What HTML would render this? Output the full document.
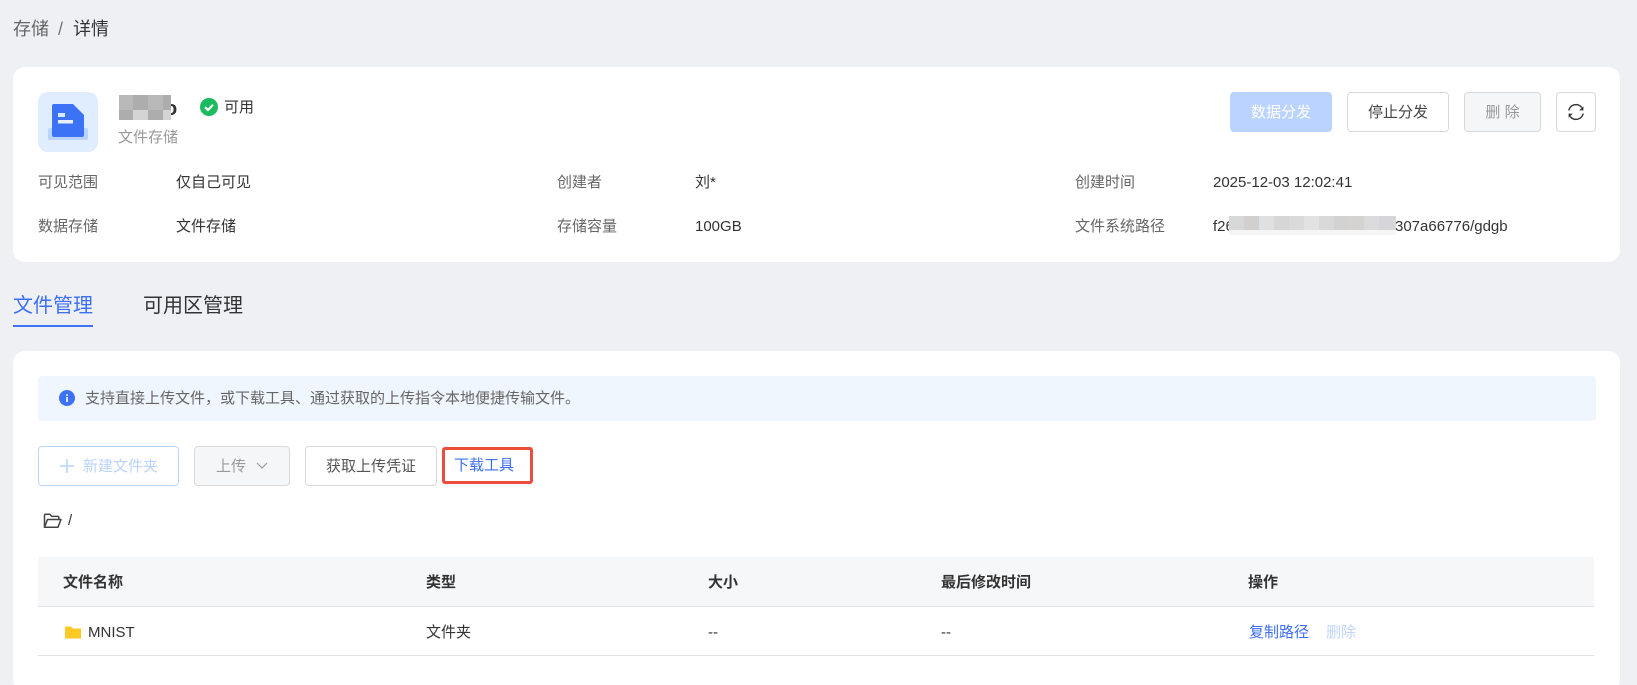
<!DOCTYPE html>
<html lang="zh-CN">
<head>
<meta charset="utf-8">
<title>存储详情</title>
<style>
*{box-sizing:border-box;margin:0;padding:0}
html,body{width:1637px;height:685px;overflow:hidden;background:#eff0f4}
body{position:relative;font-family:"Liberation Sans","Noto Sans CJK SC",sans-serif;font-size:15px;color:#333}
.a{position:absolute;white-space:nowrap}
.t{position:absolute;white-space:nowrap;height:24px;line-height:24px;margin-top:1px}
.card{position:absolute;left:13px;width:1607px;background:#fff}
.l{color:#666}
.btn{position:absolute;height:40px;line-height:40px;text-align:center;border:1px solid #d9d9d9;border-radius:4px;background:#fff;color:#444;white-space:nowrap}
.th{font-weight:700;color:#333}
.m{position:absolute}
</style>
</head>
<body>
<!-- breadcrumb -->
<div class="t" style="left:13px;top:16px;font-size:18px;color:#666">存储</div>
<div class="t" style="left:58px;top:16px;font-size:18px;color:#777">/</div>
<div class="t" style="left:73px;top:16px;font-size:18px;color:#333">详情</div>

<!-- header card -->
<div class="card" style="top:67px;height:195px;border-radius:12px"></div>
<div class="a" style="left:38px;top:92px;width:60px;height:60px;background:#e0ecff;border-radius:10px"></div>
<svg class="a" style="left:38px;top:92px" width="60" height="60" viewBox="0 0 60 60">
  <rect x="10" y="36" width="40" height="12" rx="2" fill="#b9d4ff"/>
  <path d="M16 12h19l11 11v20a2 2 0 0 1-2 2H16a2 2 0 0 1-2-2V14a2 2 0 0 1 2-2z" fill="#3c72f6"/>
  <rect x="20" y="21" width="7" height="4" fill="#dbe6ff"/>
  <rect x="20" y="28" width="15" height="3.5" fill="#e8efff"/>
</svg>

<!-- masked name -->
<div class="a" style="left:165px;top:97px;font-size:20px;line-height:24px;font-weight:700;color:#333">o</div>
<div class="m" style="left:119px;top:95px;width:14px;height:15px;background:#b9b9b9"></div>
<div class="m" style="left:133px;top:95px;width:15px;height:15px;background:#adadad"></div>
<div class="m" style="left:148px;top:95px;width:15px;height:15px;background:#b9b9b9"></div>
<div class="m" style="left:163px;top:95px;width:8px;height:15px;background:#adadad"></div>
<div class="m" style="left:119px;top:110px;width:14px;height:10px;background:#adadad"></div>
<div class="m" style="left:133px;top:110px;width:15px;height:10px;background:#d4d4d4"></div>
<div class="m" style="left:148px;top:110px;width:15px;height:10px;background:#adadad"></div>
<div class="m" style="left:163px;top:110px;width:8px;height:10px;background:#d4d4d4"></div>

<svg class="a" style="left:200px;top:98px" width="18" height="18" viewBox="0 0 18 18">
  <circle cx="9" cy="9" r="9" fill="#1dbb5f"/>
  <path d="M5 9.200l3 2.800 5-5.200" fill="none" stroke="#fff" stroke-width="2.200"/>
</svg>
<div class="t" style="left:224px;top:95px">可用</div>
<div class="t" style="left:118px;top:125px;color:#999">文件存储</div>

<div class="btn" style="left:1230px;top:92px;width:102px;background:#bad4ff;border-color:#bad4ff;color:#fff">数据分发</div>
<div class="btn" style="left:1347px;top:92px;width:102px;">停止分发</div>
<div class="btn" style="left:1464px;top:92px;width:77px;background:#f5f6f8;color:#999">删 除</div>
<div class="btn" style="left:1556px;top:92px;width:40px"></div>
<svg class="a" style="left:1566px;top:102px" width="20" height="20" viewBox="0 0 20 20">
  <path d="M2.800 8.500A7.300 7.300 0 0 1 15.800 5.600" fill="none" stroke="#333" stroke-width="1.400"/>
  <path d="M17.200 11.500A7.300 7.300 0 0 1 4.200 14.400" fill="none" stroke="#333" stroke-width="1.400"/>
  <path d="M17.400 4.200v4.200h-4.200z" fill="#333"/>
  <path d="M2.600 15.800v-4.200h4.200z" fill="#333"/>
</svg>

<!-- info rows -->
<div class="t l" style="left:38px;top:170px">可见范围</div>
<div class="t" style="left:176px;top:170px">仅自己可见</div>
<div class="t l" style="left:557px;top:170px">创建者</div>
<div class="t" style="left:695px;top:170px">刘*</div>
<div class="t l" style="left:1075px;top:170px">创建时间</div>
<div class="t" style="left:1213px;top:170px">2025-12-03 12:02:41</div>

<div class="t l" style="left:38px;top:214px">数据存储</div>
<div class="t" style="left:176px;top:214px">文件存储</div>
<div class="t l" style="left:557px;top:214px">存储容量</div>
<div class="t" style="left:695px;top:214px">100GB</div>
<div class="t l" style="left:1075px;top:214px">文件系统路径</div>
<div class="t" style="left:1213px;top:214px">f26</div>
<div class="t" style="left:1395px;top:214px">307a66776/gdgb</div>
<!-- path mask -->
<div class="m" style="left:1229px;top:230px;width:167px;height:5px;background:#f5f5f5"></div>
<div class="m" style="left:1229px;top:216px;width:15px;height:14px;background:#d8d8d9"></div>
<div class="m" style="left:1244px;top:216px;width:15px;height:14px;background:#d2d0ce"></div>
<div class="m" style="left:1259px;top:216px;width:15px;height:14px;background:#dfe0e1"></div>
<div class="m" style="left:1274px;top:216px;width:15px;height:14px;background:#d6d6d6"></div>
<div class="m" style="left:1289px;top:216px;width:15px;height:14px;background:#dadada"></div>
<div class="m" style="left:1304px;top:216px;width:15px;height:14px;background:#e2e2e3"></div>
<div class="m" style="left:1319px;top:216px;width:15px;height:14px;background:#d9d9da"></div>
<div class="m" style="left:1334px;top:216px;width:15px;height:14px;background:#d3d2d1"></div>
<div class="m" style="left:1349px;top:216px;width:15px;height:14px;background:#d5d3d2"></div>
<div class="m" style="left:1364px;top:216px;width:15px;height:14px;background:#dbdbdb"></div>
<div class="m" style="left:1379px;top:216px;width:17px;height:14px;background:#d5d5da"></div>

<!-- tabs -->
<div class="t" style="left:13px;top:290px;height:30px;line-height:30px;font-size:20px;color:#3d6ff5">文件管理</div>
<div class="m" style="left:13px;top:325px;width:80px;height:2px;background:#3d72f6"></div>
<div class="t" style="left:143px;top:290px;height:30px;line-height:30px;font-size:20px;color:#333">可用区管理</div>

<!-- main card -->
<div class="card" style="top:351px;height:340px;border-radius:12px"></div>
<div class="a" style="left:38px;top:376px;width:1558px;height:45px;background:#f0f6fe;border-radius:4px"></div>
<svg class="a" style="left:59px;top:390px" width="16" height="16" viewBox="0 0 16 16">
  <circle cx="8" cy="8" r="8" fill="#3d72f6"/>
  <rect x="7.200" y="7" width="1.600" height="5" fill="#fff"/>
  <rect x="7.200" y="4.200" width="1.600" height="1.700" fill="#fff"/>
</svg>
<div class="t" style="left:85px;top:386px;color:#666">支持直接上传文件，或下载工具、通过获取的上传指令本地便捷传输文件。</div>

<!-- toolbar -->
<div class="btn" style="left:38px;top:446px;width:141px;border-color:#bad4ff;color:#bad4ff;padding-left:24px">新建文件夹</div>
<svg class="a" style="left:59px;top:458px" width="16" height="16" viewBox="0 0 16 16">
  <path d="M8 1v14M1 8h14" stroke="#bad4ff" stroke-width="1.600" fill="none"/>
</svg>
<div class="btn" style="left:194px;top:446px;width:96px;background:#f5f6f8;color:#999;text-align:left;padding-left:21px">上传</div>
<svg class="a" style="left:255px;top:461px" width="14" height="10" viewBox="0 0 14 10">
  <path d="M2 2l5 5 5-5" fill="none" stroke="#999" stroke-width="1.200"/>
</svg>
<div class="btn" style="left:305px;top:446px;width:132px;color:#555">获取上传凭证</div>
<div class="a" style="left:442px;top:447px;width:91px;height:37px;border:3px solid #ee4c3e;border-radius:3px;background:#fff;color:#3d6ff5;font-size:15px;line-height:31px;padding-left:9px">下载工具</div>

<!-- path -->
<svg class="a" style="left:43px;top:513px" width="20" height="16" viewBox="0 0 20 16">
  <path d="M1.500 14V2.200a1 1 0 0 1 1-1h4.300l2 2.200h6a1 1 0 0 1 1 1V6.500" fill="none" stroke="#444" stroke-width="1.500"/>
  <path d="M1.500 14.200l3-7.700h13.500l-3 7.700z" fill="none" stroke="#444" stroke-width="1.500" stroke-linejoin="round"/>
</svg>
<div class="t" style="left:68px;top:508px;color:#333">/</div>

<!-- table -->
<div class="a" style="left:38px;top:557px;width:1556px;height:50px;background:#f6f7f9;border-bottom:1px solid #e2e3ee"></div>
<div class="t th" style="left:63px;top:570px">文件名称</div>
<div class="t th" style="left:426px;top:570px">类型</div>
<div class="t th" style="left:708px;top:570px">大小</div>
<div class="t th" style="left:941px;top:570px">最后修改时间</div>
<div class="t th" style="left:1248px;top:570px">操作</div>
<svg class="a" style="left:65px;top:625px" width="16" height="14" viewBox="0 0 16 14">
  <path d="M0 1.500h6l2 2h8v10H0z" fill="#ffc926"/>
</svg>
<div class="t" style="left:88px;top:620px">MNIST</div>
<div class="t" style="left:426px;top:620px">文件夹</div>
<div class="t" style="left:708px;top:620px">--</div>
<div class="t" style="left:941px;top:620px">--</div>
<div class="t" style="left:1249px;top:620px;color:#3d6ff5">复制路径</div>
<div class="t" style="left:1326px;top:620px;color:#c0d5ff">删除</div>
<div class="m" style="left:38px;top:655px;width:1556px;height:1px;background:#e2e3ea"></div>
</body>
</html>
